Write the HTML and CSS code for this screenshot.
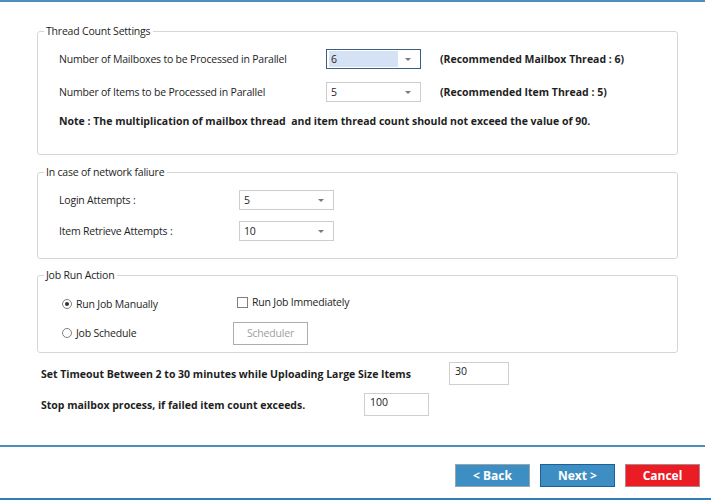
FILE: index.html
```html
<!DOCTYPE html>
<html lang="en">
<head>
  <meta charset="UTF-8">
  <title>Migration Settings</title>
  <link rel="stylesheet" href="styles.css">
</head>
<body>

  <div class="top-line"></div>

  <div class="content">

    <fieldset class="group group-threads">
      <legend>Thread Count Settings</legend>
      <div class="thread-row">
        <span class="label">Number of Mailboxes to be Processed in Parallel</span>
        <div class="combo focused"><span class="value selected">6</span><span class="arrow"></span></div>
        <span class="hint">(Recommended Mailbox Thread : 6)</span>
      </div>
      <div class="thread-row">
        <span class="label">Number of Items to be Processed in Parallel</span>
        <div class="combo"><span class="value">5</span><span class="arrow"></span></div>
        <span class="hint">(Recommended Item Thread : 5)</span>
      </div>
      <div class="note">Note : The multiplication of mailbox thread &nbsp;and item thread count should not exceed the value of 90.</div>
    </fieldset>

    <fieldset class="group group-network">
      <legend>In case of network faliure</legend>
      <div class="net-row">
        <span class="label">Login Attempts :</span>
        <div class="combo"><span class="value">5</span><span class="arrow"></span></div>
      </div>
      <div class="net-row">
        <span class="label">Item Retrieve Attempts :</span>
        <div class="combo"><span class="value">10</span><span class="arrow"></span></div>
      </div>
    </fieldset>

    <fieldset class="group group-job">
      <legend>Job Run Action</legend>
      <div class="job-row first">
        <label class="option"><span class="radio checked"></span>Run Job Manually</label>
        <label class="option check-opt"><span class="checkbox"></span>Run Job Immediately</label>
      </div>
      <div class="job-row">
        <label class="option"><span class="radio"></span>Job Schedule</label>
        <button class="sched-btn" type="button">Scheduler</button>
      </div>
    </fieldset>

    <div class="extra">
      <div class="extra-row timeout">
        <span class="strong">Set Timeout Between 2 to 30 minutes while Uploading Large Size Items</span>
        <input class="num-box" type="text" value="30">
      </div>
      <div class="extra-row failed">
        <span class="strong">Stop mailbox process, if failed item count exceeds.</span>
        <input class="num-box" type="text" value="100">
      </div>
    </div>

  </div>

  <div class="footer">
    <div class="footer-line"></div>
    <div class="buttons">
      <button class="nav-btn" type="button">&lt; Back</button>
      <button class="nav-btn next" type="button">Next &gt;</button>
      <button class="nav-btn cancel" type="button">Cancel</button>
    </div>
  </div>

</body>
</html>
```

FILE: styles.css
```css
body {
  margin: 0;
  width: 711px;
  height: 501px;
  overflow: hidden;
  background: #fff;
  font-family: "Open Sans", "Noto Sans", sans-serif;
  font-size: 10.5px;
  letter-spacing: -0.2px;
  color: #1e1e1e;
}
.top-line {
  width: 705px;
  height: 2px;
  background: #4f8dbb;
}
.content {
  padding: 22px 33px 0 37px;
}
.group {
  margin: 0;
  border: 1px solid #d6d6d6;
  border-radius: 3px;
  padding: 11px 0 0 21px;
}
.group legend {
  margin-left: -15px;
  padding: 0 3px 0 2px;
  line-height: 14px;
  height: 14px;
}
.label {
  line-height: 14px;
}
.combo {
  box-sizing: border-box;
  height: 20px;
  width: 95px;
  border: 1px solid #cdcdcd;
  display: flex;
  align-items: center;
  padding: 0 2px 0 2px;
}
.combo .value {
  flex: 1;
  height: 16px;
  line-height: 16px;
  padding-left: 2px;
}
.combo .value.selected {
  background: #d5e1f5;
  margin-right: 18px;
}
.combo.focused {
  border-color: #3d5e7e;
}
.combo .arrow {
  width: 0;
  height: 0;
  border-left: 3px solid transparent;
  border-right: 3px solid transparent;
  border-top: 3px solid #7a7a7a;
  margin-right: 7px;
}
.combo.focused .arrow {
  margin-left: -11px;
}

/* thread group */
.group-threads {
  padding-bottom: 26px;
}
.thread-row {
  display: flex;
  align-items: center;
  margin-bottom: 13px;
}
.thread-row .label {
  width: 267px;
}
.hint {
  margin-left: 19px;
  font-weight: bold;
  letter-spacing: 0;
}
.note {
  font-weight: bold;
  letter-spacing: 0;
  line-height: 14px;
  margin-top: -1px;
}

/* network group */
.group-network {
  margin-top: 10px;
  padding-bottom: 17px;
}
.net-row {
  display: flex;
  align-items: center;
}
.net-row + .net-row {
  margin-top: 11px;
}
.net-row .label {
  width: 180px;
}

/* job group */
.group-job {
  margin-top: 9px;
  padding-bottom: 8px;
}
.job-row {
  display: flex;
  align-items: center;
  height: 22px;
}
.job-row.first {
  margin-bottom: 7px;
}
.option {
  display: flex;
  align-items: center;
  width: 172px;
  padding-left: 3px;
}
.radio {
  box-sizing: border-box;
  width: 10px;
  height: 10px;
  border: 1px solid #7f7f7f;
  border-radius: 50%;
  margin-right: 4px;
  display: flex;
  align-items: center;
  justify-content: center;
}
.radio.checked::after {
  content: "";
  width: 4px;
  height: 4px;
  border-radius: 50%;
  background: #333;
}
.check-opt {
  width: auto;
  margin-top: -4px;
}
.checkbox {
  box-sizing: border-box;
  width: 11px;
  height: 11px;
  border: 1px solid #7f7f7f;
  margin-right: 4px;
}
.sched-btn {
  box-sizing: border-box;
  width: 75px;
  height: 23px;
  margin-left: -1px;
  background: #fff;
  border: 1px solid #adadad;
  font-family: inherit;
  font-size: 10.5px;
  letter-spacing: -0.2px;
  color: #a0a0a0;
  padding: 0;
}

/* bottom settings */
.extra {
  padding: 9px 0 0 4px;
}
.extra-row {
  display: flex;
  align-items: center;
  height: 23px;
}
.extra-row.failed {
  margin-top: 8px;
}
.strong {
  font-weight: bold;
  letter-spacing: 0;
}
.num-box {
  box-sizing: border-box;
  height: 23px;
  border: 1px solid #cfcfcf;
  font-family: inherit;
  font-size: 10.5px;
  color: #222;
  padding: 0 5px 6px;
  outline: none;
}
.timeout .num-box {
  width: 60px;
  margin-left: auto;
  margin-right: 169px;
}
.failed .num-box {
  width: 65px;
  margin-left: auto;
  margin-right: 249px;
}

/* footer */
.footer {
  margin-top: 29px;
}
.footer-line {
  width: 705px;
  height: 2px;
  background: #4f8dbb;
}
.buttons {
  box-sizing: border-box;
  display: flex;
  justify-content: flex-end;
  gap: 10px;
  padding: 17px 11px 0 0;
  height: 53px;
  border-bottom: 2px solid #2f7fbf;
}
.nav-btn {
  box-sizing: border-box;
  width: 75px;
  height: 23px;
  border: 1px solid #9aa4ad;
  background: #3d8fc3;
  color: #fff;
  font-family: inherit;
  font-size: 12px;
  font-weight: bold;
  letter-spacing: 0;
  padding: 0;
}
.nav-btn.next {
  border-color: #1f5f9c;
}
.nav-btn.cancel {
  background: #ec1c24;
  border-color: #b0868a;
}
```
